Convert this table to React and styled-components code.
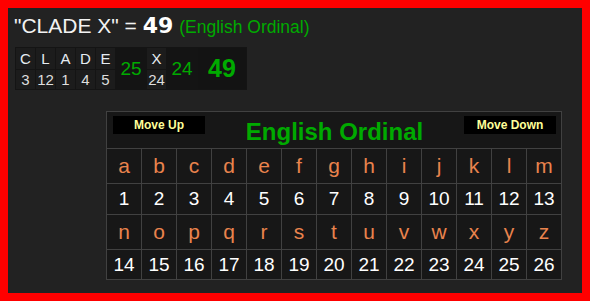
import React from "react";
import styled, { createGlobalStyle } from "styled-components";

const GlobalStyle = createGlobalStyle`
  body {
    margin: 0;
    background: #222;
    font-family: "Liberation Sans", Arial, sans-serif;
  }
`;

const Page = styled.div`
  box-sizing: border-box;
  width: 590px;
  height: 301px;
  border: 8px solid #ff0000;
  background-color: #222;
  padding: 6px 6px 0 6px;
`;

const Title = styled.div`
  color: #f2f2f2;
  font-size: 21px;
  line-height: 24px;
  white-space: nowrap;
`;

const TitleSum = styled.span`
  font-family: "DejaVu Sans", Verdana, sans-serif;
  font-size: 22px;
  font-weight: bold;
  color: #fff;
`;

const TitleCipher = styled.span`
  color: #00aa00;
  font-size: 17.5px;
`;

const Breakdown = styled.div`
  display: inline-flex;
  margin: 8px 0 0 1px;
  padding: 1px;
  gap: 1px;
  background-color: #141414;
`;

const LetterCol = styled.div`
  display: flex;
  flex-direction: column;
  gap: 1px;
  width: 19px;
`;

const LetterTop = styled.div`
  height: 21px;
  background-color: #1c1c1c;
  color: #e6ecf2;
  font-size: 15px;
  line-height: 21px;
  text-align: center;
`;

const LetterBottom = styled(LetterTop)`
  height: 19px;
  line-height: 19px;
  color: #dedede;
`;

const WordSum = styled.div`
  display: flex;
  align-items: center;
  justify-content: center;
  width: ${(p) => p.$w}px;
  color: #00aa00;
  font-size: 19px;
`;

const Total = styled.div`
  display: flex;
  align-items: center;
  justify-content: center;
  width: 48px;
  background-color: #131313;
  color: #00aa00;
  font-size: 25px;
  font-weight: bold;
`;

const TableWrap = styled.div`
  display: flex;
  justify-content: flex-end;
  margin-top: 21px;
  padding-right: 14px;
`;

const Grid = styled.div`
  display: grid;
  grid-template-columns: repeat(13, 34px);
  grid-template-rows: 36px 34px 30px 34px 29px;
  gap: 1px;
  padding: 1px;
  background-color: #414141;
`;

const Header = styled.div`
  grid-column: 1 / -1;
  display: flex;
  justify-content: space-between;
  align-items: flex-start;
  padding: 4px 5px 0 6px;
  background-color: #171717;
`;

const MoveButton = styled.div`
  width: 92px;
  height: 18px;
  background-color: #000;
  color: #ffff99;
  font-size: 12px;
  font-weight: bold;
  line-height: 18px;
  text-align: center;
`;

const Heading = styled.div`
  align-self: center;
  color: #00aa00;
  font-size: 24px;
  font-weight: bold;
  line-height: 28px;
`;

const Cell = styled.div`
  display: flex;
  align-items: center;
  justify-content: center;
  background-color: #171717;
  color: ${(p) => (p.$letter ? "#e9834d" : "#fff")};
  font-size: ${(p) => (p.$letter ? 21 : 19)}px;
`;

const word = [
  ["C", 3],
  ["L", 12],
  ["A", 1],
  ["D", 4],
  ["E", 5],
];

const alphabet = "abcdefghijklmnopqrstuvwxyz".split("");

const App = () => {
  const first = alphabet.slice(0, 13);
  const second = alphabet.slice(13);
  return (
    <>
      <GlobalStyle />
      <Page>
        <Title>
          "CLADE X" = <TitleSum>49</TitleSum>{" "}
          <TitleCipher>(English Ordinal)</TitleCipher>
        </Title>
        <Breakdown>
          {word.map(([l, n]) => (
            <LetterCol key={l}>
              <LetterTop>{l}</LetterTop>
              <LetterBottom>{n}</LetterBottom>
            </LetterCol>
          ))}
          <WordSum $w={30}>25</WordSum>
          <LetterCol>
            <LetterTop>X</LetterTop>
            <LetterBottom>24</LetterBottom>
          </LetterCol>
          <WordSum $w={30}>24</WordSum>
          <Total>49</Total>
        </Breakdown>
        <TableWrap>
          <Grid>
            <Header>
              <MoveButton>Move Up</MoveButton>
              <Heading>English Ordinal</Heading>
              <MoveButton>Move Down</MoveButton>
            </Header>
            {first.map((l) => (
              <Cell key={l} $letter>
                {l}
              </Cell>
            ))}
            {first.map((l, i) => (
              <Cell key={l + "n"}>{i + 1}</Cell>
            ))}
            {second.map((l) => (
              <Cell key={l} $letter>
                {l}
              </Cell>
            ))}
            {second.map((l, i) => (
              <Cell key={l + "n"}>{i + 14}</Cell>
            ))}
          </Grid>
        </TableWrap>
      </Page>
    </>
  );
};

export default App;
